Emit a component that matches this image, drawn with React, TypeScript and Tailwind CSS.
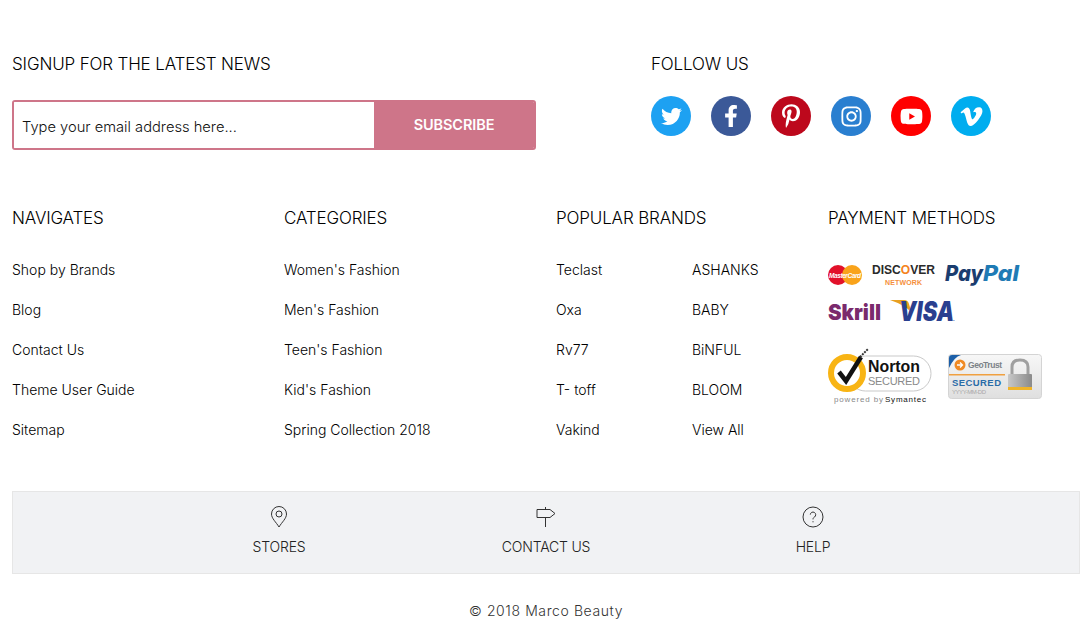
import { FaFacebookF, FaInstagram, FaPinterestP, FaTwitter, FaVimeoV, FaYoutube } from "react-icons/fa";

const socials = [
  { icon: FaTwitter, bg: "bg-[#1da1f2]", size: "text-[21px]" },
  { icon: FaFacebookF, bg: "bg-[#3b5998]", size: "text-[22px]" },
  { icon: FaPinterestP, bg: "bg-[#bd081c]", size: "text-[24px]" },
  { icon: FaInstagram, bg: "bg-[#2a7fd0]", size: "text-[23px]" },
  { icon: FaYoutube, bg: "bg-[#ff0000]", size: "text-[23px]" },
  { icon: FaVimeoV, bg: "bg-[#00adef]", size: "text-[25px]" },
];

const navigates = ["Shop by Brands", "Blog", "Contact Us", "Theme User Guide", "Sitemap"];
const categories = ["Women's Fashion", "Men's Fashion", "Teen's Fashion", "Kid's Fashion", "Spring Collection 2018"];
const brandsA = ["Teclast", "Oxa", "Rv77", "T- toff", "Vakind"];
const brandsB = ["ASHANKS", "BABY", "BiNFUL", "BLOOM", "View All"];

const LinkList = ({ items }: { items: string[] }) => (
  <ul className="flex flex-col">
    {items.map((item) => (
      <li key={item} className="h-10 text-[14px] font-light leading-10 text-black">
        {item}
      </li>
    ))}
  </ul>
);

const Heading = ({ children }: { children: string }) => (
  <h3 className="h-6 text-[17px] font-light leading-6 tracking-[-0.15px] text-black">{children}</h3>
);

const PaymentLogos = () => (
  <svg width="230" height="70" viewBox="0 0 230 70" className="block">
    <circle cx="10" cy="15" r="10" fill="#e2112a" />
    <circle cx="24" cy="15" r="10" fill="#f9a31a" />
    <text x="17" y="17.5" textAnchor="middle" fontSize="6.5" fontWeight="700" fontStyle="italic" fill="#fff" fontFamily="Liberation Sans, sans-serif" textLength="32">MasterCard</text>
    <text x="44" y="13.5" fontSize="12" fontWeight="700" fill="#2a2a2a" fontFamily="Liberation Sans, sans-serif" textLength="63" lengthAdjust="spacingAndGlyphs">DISC<tspan fill="#f58220">O</tspan>VER</text>
    <text x="57" y="25" fontSize="7" fontWeight="700" fill="#f58f3c" fontFamily="Liberation Sans, sans-serif" textLength="37">NETWORK</text>
    <text x="117" y="21" fontSize="22" fontWeight="800" fontStyle="italic" fill="#1b3d6f" fontFamily="Inter, sans-serif" textLength="38" lengthAdjust="spacingAndGlyphs">Pay</text>
    <text x="155" y="21" fontSize="22" fontWeight="800" fontStyle="italic" fill="#1f7bb5" fontFamily="Inter, sans-serif" textLength="36" lengthAdjust="spacingAndGlyphs">Pal</text>
    <text x="0" y="60" fontSize="22" fontWeight="900" fill="#7a2a6c" fontFamily="Inter, sans-serif" textLength="53" lengthAdjust="spacingAndGlyphs">Skrill</text>
    <path d="M62 40 L76 40 Q80 40 81 44 L84 54 Q80 46 62 40 Z" fill="#e8a020" />
    <text x="71" y="61" fontSize="27" fontWeight="900" fontStyle="italic" fill="#2a3f8f" fontFamily="Inter, sans-serif" textLength="55" lengthAdjust="spacingAndGlyphs">VISA</text>
    <text x="125" y="61" fontSize="6" fontWeight="700" fill="#2a3f8f" fontFamily="Liberation Sans, sans-serif">.</text>
  </svg>
);

const NortonBadge = () => (
  <svg width="106" height="58" viewBox="0 0 106 58" className="block">
    <rect x="20" y="8" width="83" height="35" rx="17.5" fill="#fff" stroke="#c9c9c9" />
    <circle cx="19" cy="25" r="16" fill="#fff" stroke="#f8b414" strokeWidth="6" />
    <path d="M11 24 L18 33 L33 9" fill="none" stroke="#111" strokeWidth="4.5" />
    <path d="M32 9 L40 1" stroke="#333" strokeWidth="2" strokeDasharray="2 1" />
    <text x="40" y="24" fontSize="17" fontWeight="700" fill="#111" fontFamily="Liberation Sans, sans-serif" textLength="52" lengthAdjust="spacingAndGlyphs">Norton</text>
    <text x="40" y="37" fontSize="11" fill="#8a8a8a" fontFamily="Liberation Sans, sans-serif" textLength="52">SECURED</text>
    <text x="6" y="54" fontSize="8" fill="#8a8a8a" fontFamily="Liberation Sans, sans-serif" textLength="49">powered by</text>
    <text x="57" y="54" fontSize="8" fill="#111" fontFamily="Liberation Sans, sans-serif" textLength="41">Symantec</text>
  </svg>
);

const GeoTrustBadge = () => (
  <svg width="94" height="46" viewBox="0 0 94 46" className="block">
    <defs>
      <linearGradient id="geo-bg" x1="0" y1="0" x2="0" y2="1">
        <stop offset="0" stopColor="#f7f7f7" />
        <stop offset="1" stopColor="#dfdfdf" />
      </linearGradient>
      <linearGradient id="geo-lock" x1="0" y1="0" x2="1" y2="0">
        <stop offset="0" stopColor="#c8c8c8" />
        <stop offset="1" stopColor="#8a8a8a" />
      </linearGradient>
    </defs>
    <rect x="0.5" y="0.5" width="93" height="44" rx="3" fill="url(#geo-bg)" stroke="#d4d4d4" />
    <path d="M1 14 L1 4 Q1 1 4 1 L13 1 Q6 3 1 14 Z" fill="#1c5fa8" />
    <circle cx="12" cy="11" r="5.5" fill="#f08a24" />
    <path d="M9 11 H14 M12 8.5 L14.5 11 L12 13.5" stroke="#fff" strokeWidth="1.3" fill="none" />
    <text x="20" y="14" fontSize="8.5" fontWeight="700" fill="#7c8288" fontFamily="Liberation Sans, sans-serif" textLength="34">GeoTrust</text>
    <rect x="1" y="20" width="56" height="1.5" fill="#f0a040" />
    <text x="4" y="32" fontSize="9.5" fontWeight="700" fill="#2a6ca8" fontFamily="Liberation Sans, sans-serif" textLength="49">SECURED</text>
    <text x="4" y="40" fontSize="6" fill="#a8a8a8" fontFamily="Liberation Sans, sans-serif" textLength="34">YYYY-MM-DD</text>
    <path d="M64 21 V13 Q64 6 72 6 Q80 6 80 13 V21" fill="none" stroke="#a0a0a0" strokeWidth="3" />
    <rect x="60" y="20" width="24" height="16" rx="1" fill="url(#geo-lock)" />
    <rect x="60" y="33" width="24" height="3" fill="#f0b429" />
  </svg>
);

const PinIcon = () => (
  <svg width="20" height="22" viewBox="0 0 20 22" fill="none" stroke="#333" strokeWidth="1">
    <path d="M10 21 C7 16 2.5 12.5 2.5 8 A7.5 7.5 0 0 1 17.5 8 C17.5 12.5 13 16 10 21 Z" />
    <circle cx="10" cy="8" r="3" />
  </svg>
);

const SignIcon = () => (
  <svg width="20" height="22" viewBox="0 0 20 22" fill="none" stroke="#333" strokeWidth="1">
    <path d="M1 3.5 H14 L19 7.5 L14 11.5 H1 Z" />
    <path d="M9.5 1 V3.5 M9.5 11.5 V21" />
  </svg>
);

const HelpIcon = () => (
  <svg width="22" height="22" viewBox="0 0 22 22" fill="none" stroke="#333" strokeWidth="1">
    <circle cx="11" cy="11" r="10" />
    <path d="M8.3 8.6 A2.7 2.7 0 1 1 12.5 11 C11.4 11.7 11 12.2 11 13.4" />
    <path d="M11 15.2 V16.3" />
  </svg>
);

const shortcuts = [
  { label: "STORES", icon: PinIcon },
  { label: "CONTACT US", icon: SignIcon },
  { label: "HELP", icon: HelpIcon },
];

export default function App() {
  return (
    <div className="min-h-[628px] w-full bg-white pl-3 pr-[11px] font-['Inter',sans-serif] font-light">
      <div className="flex pt-[52px]">
        <div className="w-[639px]">
          <Heading>SIGNUP FOR THE LATEST NEWS</Heading>
          <form className="mt-6 flex h-[50px] w-[524px] overflow-hidden rounded-[3px] border-2 border-[#ce7589]">
            <div className="flex flex-1 items-center bg-white pl-2 pt-[4px] text-[14.7px] font-light text-[#111]">
              Type your email address here...
            </div>
            <button type="button" className="w-[160px] bg-[#ce7589] text-[14.5px] font-semibold tracking-[-0.1px] text-white">
              SUBSCRIBE
            </button>
          </form>
        </div>
        <div>
          <Heading>FOLLOW US</Heading>
          <div className="mt-5 flex gap-5">
            {socials.map(({ icon: Icon, bg, size }, i) => (
              <div key={i} className={`flex h-10 w-10 items-center justify-center rounded-full text-white ${bg} ${size}`}>
                <Icon />
              </div>
            ))}
          </div>
        </div>
      </div>

      <div className="mt-[56px] grid grid-cols-[272px_272px_272px_1fr]">
        <div>
          <Heading>NAVIGATES</Heading>
          <div className="mt-[20px]"><LinkList items={navigates} /></div>
        </div>
        <div>
          <Heading>CATEGORIES</Heading>
          <div className="mt-[20px]"><LinkList items={categories} /></div>
        </div>
        <div>
          <Heading>POPULAR BRANDS</Heading>
          <div className="mt-[20px] grid grid-cols-[136px_1fr]">
            <LinkList items={brandsA} />
            <LinkList items={brandsB} />
          </div>
        </div>
        <div>
          <Heading>PAYMENT METHODS</Heading>
          <div className="mt-[30px]"><PaymentLogos /></div>
          <div className="mt-[18px] flex items-start gap-[14px]">
            <NortonBadge />
            <div className="mt-[6px]"><GeoTrustBadge /></div>
          </div>
        </div>
      </div>

      <div className="mt-[41px] flex h-[83px] justify-center border border-[#e6e6e6] bg-[#f1f2f4]">
        {shortcuts.map(({ label, icon: Icon }) => (
          <div key={label} className="flex w-[267px] flex-col items-center pt-[14px]">
            <Icon />
            <span className="mt-[9px] text-[14px] font-light leading-5 tracking-[-0.2px] text-[#222]">{label}</span>
          </div>
        ))}
      </div>

      <p className="mt-[27px] text-center text-[14px] font-light leading-5 tracking-[0.6px] text-[#333]">© 2018 Marco Beauty</p>
    </div>
  );
}
